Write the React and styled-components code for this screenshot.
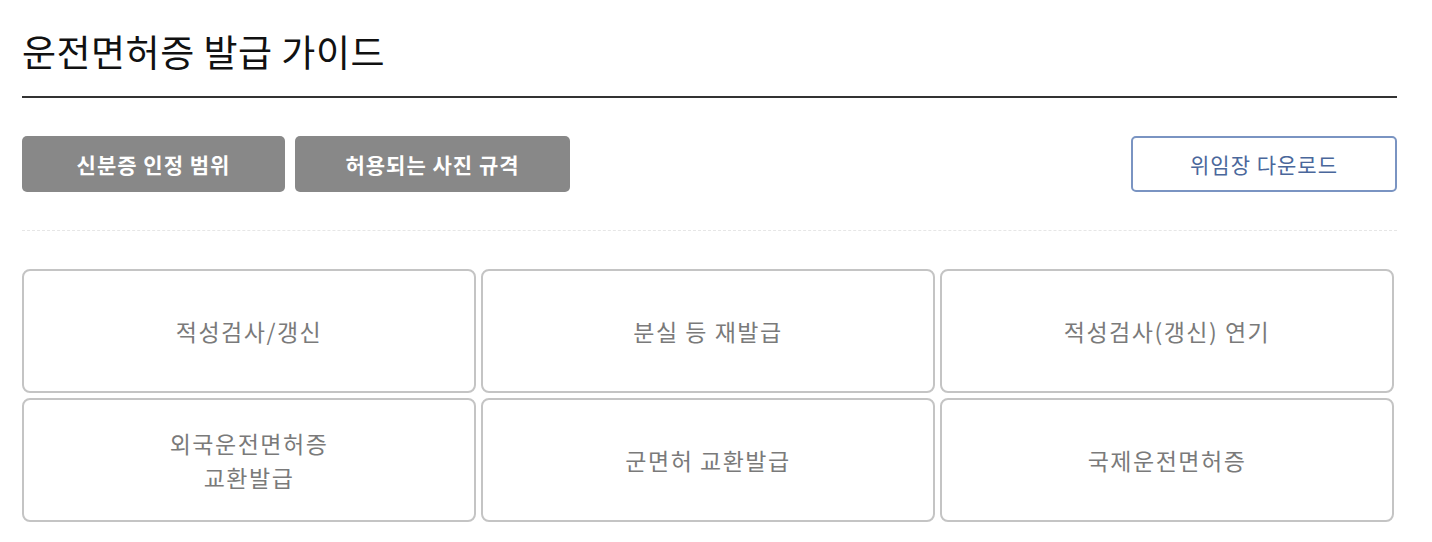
import React from 'react'
import styled, { createGlobalStyle } from 'styled-components'

const GlobalStyle = createGlobalStyle`
  body {
    margin: 0;
    background: #fff;
    font-family: 'Noto Sans CJK KR', 'Noto Sans', sans-serif;
  }
`

const Page = styled.div`
  width: 1375px;
  padding: 0 22px;
`

const Title = styled.h1`
  margin: 0;
  padding: 28px 0 22px;
  font-size: 37px;
  font-weight: 400;
  letter-spacing: 0.5px;
  line-height: 46px;
  color: #111;
  border-bottom: 2px solid #333;
`

const Toolbar = styled.div`
  display: flex;
  align-items: center;
  gap: 10px;
  margin-top: 38px;
  padding-bottom: 38px;
  border-bottom: 1px dashed #e6e6e6;
`

const TabButton = styled.button`
  width: ${({ w }) => w}px;
  height: 56px;
  border: 0;
  border-radius: 5px;
  background: #888;
  color: #fff;
  font-family: inherit;
  font-size: 21px;
  font-weight: 700;
  letter-spacing: 1px;
  cursor: pointer;
`

const DownloadButton = styled.button`
  margin-left: auto;
  width: 266px;
  height: 56px;
  border: 2px solid #7a94c2;
  border-radius: 5px;
  background: #fff;
  color: #4a679b;
  font-family: inherit;
  font-size: 21px;
  font-weight: 400;
  letter-spacing: 1px;
  cursor: pointer;
`

const Grid = styled.div`
  display: grid;
  grid-template-columns: repeat(3, 454px);
  grid-auto-rows: 124px;
  gap: 5px;
  margin-top: 38px;
`

const Card = styled.a`
  display: flex;
  align-items: center;
  justify-content: center;
  box-sizing: border-box;
  border: 2px solid #c4c4c4;
  border-radius: 8px;
  color: #7a7a7a;
  font-size: 23px;
  letter-spacing: 1.5px;
  line-height: 34px;
  text-align: center;
  text-decoration: none;
  cursor: pointer;
`

const items = [
  ['적성검사/갱신'],
  ['분실 등 재발급'],
  ['적성검사(갱신) 연기'],
  ['외국운전면허증', '교환발급'],
  ['군면허 교환발급'],
  ['국제운전면허증']
]

export default function App() {
  return (
    <>
      <GlobalStyle />
      <Page>
        <Title>운전면허증 발급 가이드</Title>
        <Toolbar>
          <TabButton w={263}>신분증 인정 범위</TabButton>
          <TabButton w={275}>허용되는 사진 규격</TabButton>
          <DownloadButton>위임장 다운로드</DownloadButton>
        </Toolbar>
        <Grid>
          {items.map((lines, i) => (
            <Card key={i}>
              <span>
                {lines.map((l, j) => (
                  <React.Fragment key={j}>
                    {j > 0 && <br />}
                    {l}
                  </React.Fragment>
                ))}
              </span>
            </Card>
          ))}
        </Grid>
      </Page>
    </>
  )
}
